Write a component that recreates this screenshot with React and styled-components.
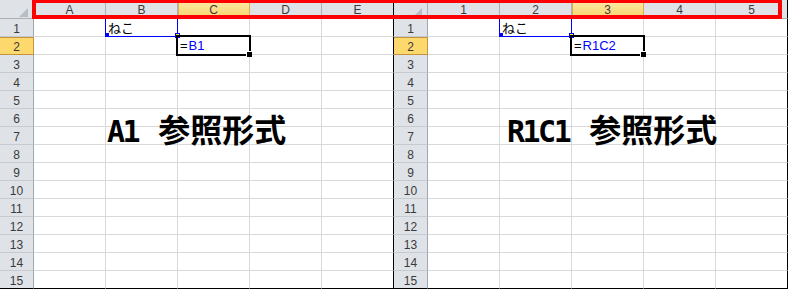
import React from 'react';
import styled, { createGlobalStyle } from 'styled-components';

const Global = createGlobalStyle`
  html, body { margin: 0; padding: 0; background: #fff; }
  body { font-family: "Liberation Sans", Arial, sans-serif; }
`;

const Stage = styled.div`
  position: relative;
  display: flex;
  width: 788px;
  height: 289px;
  background: #fff;
  overflow: hidden;
`;

const Sheet = styled.div`
  position: relative;
  display: grid;
  grid-template-columns: 34px repeat(5, 72px);
  grid-template-rows: 19px repeat(15, 18px);
  width: 394px;
  height: 289px;
`;

const HEAD_BG = '#dfe3e8';
const EDGE = '#000';

const Corner = styled.div`
  box-sizing: border-box;
  background: ${HEAD_BG};
  border-right: 1px solid #a9b0b8;
  border-bottom: 1px solid #a9b0b8;
  display: flex;
  justify-content: flex-end;
  align-items: flex-end;
  padding: 0 5px 1px 0;
`;

const ColHead = styled.div`
  box-sizing: border-box;
  background: ${(p) => (p.$active ? 'linear-gradient(#fdeaa9, #f8d46b)' : HEAD_BG)};
  border-right: 1px solid ${(p) => (p.$last ? EDGE : p.$active ? '#dcae4c' : '#aab1b9')};
  border-bottom: 1px solid #aab1b9;
  box-shadow: ${(p) => (p.$active ? 'inset 1px 0 0 #dcae4c' : 'none')};
  font: 400 12px/19px "Liberation Sans", Arial, sans-serif;
  padding-top: 1px;
  color: #3a3a3a;
  text-align: center;
`;

const RowHead = styled.div`
  box-sizing: border-box;
  background: ${(p) => (p.$active ? '#fdd86c' : HEAD_BG)};
  border-right: 1px solid ${(p) => (p.$active ? '#c4943c' : '#9ea6af')};
  border-bottom: 1px solid ${(p) => (p.$last ? EDGE : p.$active ? '#c4943c' : '#c6cbd1')};
  box-shadow: ${(p) => (p.$active ? 'inset 0 1px 0 #c4943c' : 'none')};
  font: 400 12px/18px "Liberation Sans", Arial, sans-serif;
  padding-top: 1px;
  color: #3a3a3a;
  text-align: center;
`;

const Cell = styled.div`
  box-sizing: border-box;
  border-right: 1px solid ${(p) => (p.$lastCol ? EDGE : '#d9d9d9')};
  border-bottom: 1px solid ${(p) => (p.$lastRow ? EDGE : '#d9d9d9')};
  padding-left: 1px;
  font: 400 13px/17px "Liberation Sans", "Noto Sans CJK JP", sans-serif;
  color: #000;
  white-space: nowrap;
  overflow: visible;
`;

const Kana = styled.span`
  font-family: "Noto Sans CJK JP", sans-serif;
  font-size: 13px;
  margin-left: 1px;
`;

const Ref = styled.span`
  color: #0000ff;
`;

const Eq = styled.span`
  display: inline-block;
  margin-left: 1px;
  margin-right: 1px;
`;

const RefBox = styled.div`
  position: absolute;
  left: 105px;
  top: 18px;
  width: 73px;
  height: 19px;
  box-sizing: border-box;
  border: 1px solid #0000ff;
  pointer-events: none;
`;

const Handle = styled.div`
  position: absolute;
  left: ${(p) => p.$x}px;
  top: ${(p) => p.$y}px;
  width: ${(p) => p.$s}px;
  height: ${(p) => p.$s}px;
  box-sizing: border-box;
  background: ${(p) => p.$fill};
  border: ${(p) => (p.$ring ? '1px solid #0000ff' : 'none')};
`;

const ActiveBox = styled.div`
  position: absolute;
  left: 176px;
  top: 35px;
  width: 75px;
  height: 21px;
  box-sizing: border-box;
  border: 2px solid #000;
  pointer-events: none;
`;

const FillHandle = styled.div`
  position: absolute;
  left: 247px;
  top: 52px;
  width: 5px;
  height: 5px;
  background: #000;
  box-shadow: -1px -1px 0 0 #fff;
`;

const BigLabel = styled.div`
  position: absolute;
  left: ${(p) => p.$x}px;
  top: 105px;
  white-space: nowrap;
  line-height: 32px;
  color: #000;
`;

const Latin = styled.span`
  font: 700 30px "DejaVu Sans Mono", "Liberation Mono", monospace;
  letter-spacing: -2.5px;
`;

const Kanji = styled.span`
  font: 700 32px "Noto Sans CJK JP", sans-serif;
  margin-left: 20px;
`;

const RedFrame = styled.div`
  position: absolute;
  left: 32px;
  top: -1px;
  width: 750px;
  height: 20px;
  box-sizing: border-box;
  border: 4px solid #ff0000;
  pointer-events: none;
`;

function Triangle() {
  return (
    <svg width="9" height="9" viewBox="0 0 9 9">
      <polygon points="9,0 9,9 0,9" fill="#b7bdc4" />
    </svg>
  );
}

function SheetView({ cols, cells, label }) {
  const rows = Array.from({ length: 15 }, (_, i) => i + 1);
  return (
    <Sheet>
      <Corner>
        <Triangle />
      </Corner>
      {cols.map((c, ci) => (
        <ColHead key={c} $active={ci === 2} $last={ci === 4}>
          {c}
        </ColHead>
      ))}
      {rows.map((r, ri) => (
        <React.Fragment key={r}>
          <RowHead $active={r === 2} $last={r === 15}>
            {r}
          </RowHead>
          {cols.map((c, ci) => (
            <Cell key={c} $lastCol={ci === 4} $lastRow={r === 15}>
              {cells[`${ri},${ci}`] || null}
            </Cell>
          ))}
        </React.Fragment>
      ))}
      <RefBox />
      <Handle $x={105} $y={15} $s={4} $fill="#0000ff" />
      <Handle $x={174} $y={15} $s={4} $fill="#0000ff" />
      <Handle $x={105} $y={33} $s={4} $fill="#0000ff" />
      <Handle $x={175} $y={33} $s={5} $fill="#ffff00" $ring />
      <ActiveBox />
      <FillHandle />
      <BigLabel $x={label.x}>
        <Latin>{label.latin}</Latin>
        <Kanji>参照形式</Kanji>
      </BigLabel>
    </Sheet>
  );
}

export default function App() {
  const leftCells = {
    '0,1': <Kana>ねこ</Kana>,
    '1,2': (
      <>
        <Eq>=</Eq>
        <Ref>B1</Ref>
      </>
    ),
  };
  const rightCells = {
    '0,1': <Kana>ねこ</Kana>,
    '1,2': (
      <>
        <Eq>=</Eq>
        <Ref>R1C2</Ref>
      </>
    ),
  };
  return (
    <>
      <Global />
      <Stage>
        <SheetView cols={['A', 'B', 'C', 'D', 'E']} cells={leftCells} label={{ x: 107, latin: 'A1' }} />
        <SheetView cols={['1', '2', '3', '4', '5']} cells={rightCells} label={{ x: 113, latin: 'R1C1' }} />
        <RedFrame />
      </Stage>
    </>
  );
}
